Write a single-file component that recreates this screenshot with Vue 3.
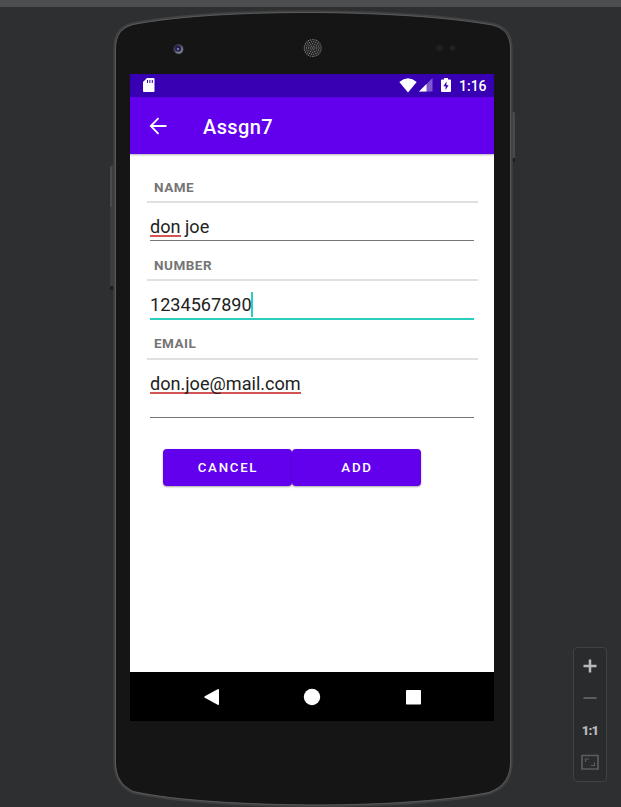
<script setup>
const fields = [
  { id: 'name', label: 'NAME', value: 'don', rest: ' joe', marked: true },
  { id: 'number', label: 'NUMBER', value: '1234567890', rest: '', focused: true },
  { id: 'email', label: 'EMAIL', value: 'don.joe@mail.com', rest: '', marked: true },
]
const dots = [{ x: 312.7, y: 48 }]
for (let ring = 1; ring <= 4; ring++) {
  const count = ring * 6
  for (let i = 0; i < count; i++) {
    const a = (i / count) * Math.PI * 2
    dots.push({ x: 312.7 + Math.cos(a) * ring * 2.1, y: 48 + Math.sin(a) * ring * 2.1 })
  }
}
</script>

<template>
  <main class="emulator">
    <svg class="shell" viewBox="0 0 621 807" aria-hidden="true">
      <rect width="621" height="7" fill="#4d4e50" />
      <rect x="110" y="165" width="5" height="125" rx="1.5" fill="#3c3d3e" />
      <rect x="110.5" y="167" width="1.2" height="40" fill="#555" />
      <rect x="110" y="286" width="4" height="4" fill="#1d1e1f" />
      <rect x="511" y="112" width="4" height="50" rx="1.5" fill="#484949" />
      <rect x="511" y="158" width="4" height="4" fill="#1d1e1f" />
      <path d="M114.5 48C115 34 120 27 133 23.500C180 14.500 246 11.500 313 11.500C382 12 447 16 493 24C505 27 511 33 511.500 48V763C511 778 505 788 489 793.500C440 803 370 806 313 806C248 805.500 177 802 133 792.500C120 786 115 777 114.500 763Z" fill="#151515" stroke="#404142" stroke-width="2.400" />
      <path d="M115.500 763V48C116 35 121 28 133 24.500C180 15.500 246 12.500 313 12.500C382 13 447 17 492 25C504 28 510 35 510.500 48V763C510 777 504 787 489 792.500C440 802 370 805 313 805C248 804.500 177 801 133 791.500C121 785 116 777 115.500 763" fill="none" stroke="#626262" stroke-width=".8" />
      <circle cx="178.500" cy="49" r="5.300" fill="#34343d" />
      <circle cx="178.800" cy="49.500" r="4.200" fill="#777789" />
      <circle cx="178" cy="48.500" r="3.200" fill="#24234f" />
      <circle cx="178" cy="49" r="1" fill="#9693d1" />
      <circle cx="312.700" cy="48" r="9.200" fill="#1e1e1e" />
      <circle v-for="(d, i) in dots" :key="i" :cx="d.x" :cy="d.y" r=".65" fill="#858585" />
      <circle cx="439.500" cy="48" r="3.300" fill="#202020" />
      <circle cx="452.500" cy="48" r="2.800" fill="#222" />
    </svg>

    <section class="screen">
      <header class="status">
        <svg class="sd" viewBox="0 0 12 14"><path d="M4 0H10.500Q11.500 0 11.500 1V13Q11.500 14 10.500 14H1Q0 14 0 13V4Z" fill="#fff" /><path d="M4.500 2V5M6.900 2V5M9.300 2V5" stroke="#3700b3" stroke-width="1" /></svg>
        <svg class="wifi" viewBox="0 0 18 15"><path d="M.3 4Q9-3.300 17.700 4L9 14.500Z" fill="#fff" /></svg>
        <svg class="signal" viewBox="0 0 14 14"><path d="M0 13.500L13.500 0V13.500Z" fill="#7f58d0" /><path d="M0 13.500L7.500 6V13.500Z" fill="#fff" /></svg>
        <svg class="battery" viewBox="0 0 10 14"><path d="M3 0H7V1.500H9Q10 1.500 10 2.500V13Q10 14 9 14H1Q0 14 0 13V2.500Q0 1.500 1 1.500H3Z" fill="#fff" /><path d="M5.500 3.500L2.400 8.300H4.600V12L7.600 7.200H5.500Z" fill="#3700b3" /></svg>
        <span class="clock">1:16</span>
      </header>
      <div class="appbar">
        <svg class="back" viewBox="0 0 18 18"><path d="M17.500 9H2M9.500 1.200L1.800 9L9.500 16.800" fill="none" stroke="#fff" stroke-width="1.800" /></svg>
        <h1>Assgn7</h1>
      </div>
      <form class="content" @submit.prevent>
        <div v-for="f in fields" :key="f.id" class="field" :class="f.id">
          <div class="label"><span>{{ f.label }}</span></div>
          <div class="entry" :class="{ focused: f.focused }">
            <span class="value" :class="{ marked: f.marked }">{{ f.value }}</span><span class="rest">{{ f.rest }}</span><i v-if="f.focused" class="caret"></i>
          </div>
        </div>
        <div class="buttons">
          <button type="button">CANCEL</button>
          <button type="button">ADD</button>
        </div>
      </form>
      <nav class="navbar">
        <svg viewBox="0 0 18 18"><path d="M2.800 8.200L15.600 1.300Q17 .7 17 2V16Q17 17.300 15.600 16.700L2.800 9.800Q1.500 9 2.800 8.200Z" fill="#fff" /></svg>
        <svg viewBox="0 0 18 18"><circle cx="9" cy="9" r="8.200" fill="#fff" /></svg>
        <svg viewBox="0 0 18 18"><rect x="2" y="2" width="15" height="14.500" rx=".7" fill="#fff" /></svg>
      </nav>
    </section>

    <aside class="zoom">
      <svg viewBox="0 0 18 18"><path d="M9 2.500V15.500M2.500 9H15.500" stroke="#b9b9b9" stroke-width="2.500" /></svg>
      <svg viewBox="0 0 18 18"><path d="M2.500 9H15.500" stroke="#5c5d5e" stroke-width="2" /></svg>
      <span>1:1</span>
      <svg viewBox="0 0 18 18"><path d="M1 2.500H17V16H1Z" fill="none" stroke="#5b5c5d" stroke-width="1.700" /><path d="M4.500 9V6H8M10 12.500H13.500V9.500" fill="none" stroke="#5b5c5d" stroke-width="1.200" /></svg>
    </aside>
  </main>
</template>

<style>
body { margin: 0; background: #2e2f31; overflow: hidden; }
</style>

<style scoped>
* { box-sizing: border-box; }
.emulator { position: relative; width: 621px; height: 807px; padding: 74px 14px 25px 130px; display: flex; justify-content: space-between; background: #2e2f31; font-family: Roboto, "Liberation Sans", sans-serif; }
.shell { position: absolute; inset: 0; width: 621px; height: 807px; }
.screen { position: relative; width: 364px; height: 647px; display: flex; flex-direction: column; background: #fff; }
.status { height: 23px; flex: none; display: flex; align-items: center; padding: 0 7px 1px 13px; background: #3700b3; color: #fff; }
.sd { width: 12px; height: 14px; }
.wifi { width: 18px; height: 15px; margin-left: auto; }
.signal { width: 14px; height: 14px; margin-left: 2px; }
.battery { width: 10px; height: 14px; margin-left: 8px; }
.clock { width: 28px; margin-left: 8px; font-size: 14px; font-weight: 500; line-height: 22px; white-space: nowrap; padding-top: 2px; }
.appbar { height: 57px; flex: none; display: flex; align-items: center; padding: 1px 20px 0 19px; background: #6200ee; color: #fff; box-shadow: 0 1px 2px rgba(0, 0, 0, .3); }
.back { width: 18px; height: 18px; }
h1 { margin: 1px 0 0 36px; font-size: 20px; line-height: 24px; font-weight: 500; letter-spacing: .4px; }
.content { flex: 1; padding: 19px 16px 0 17px; }
.field { height: 78px; }
.field.email { height: 105px; padding-top: 1px; }
.label { height: 30px; padding: 4px 7px 0; border-bottom: 2px solid #e0e0e0; color: #757575; font-size: 13.500px; line-height: 20px; font-weight: 700; letter-spacing: .5px; }
.email .label { padding-top: 3px; }
.entry { display: flex; height: 38px; margin: 0 4px 0 3px; padding-top: 11.500px; border-bottom: 1px solid #757575; color: #222; font-size: 18.100px; line-height: 24px; white-space: pre; }
.entry.focused { height: 39px; border-bottom: 2px solid #2bcdbd; }
.email .entry { height: 58px; }
.value.marked { height: 22px; background: linear-gradient(#d35454, #d35454) 0 100% / 100% 2px no-repeat; }
.caret { width: 2px; height: 25px; margin: -1px 0 0 -1px; background: #2bcdbd; }
.buttons { display: flex; margin: 15px 0 0 16px; }
button { width: 129px; height: 37px; padding: 0 0 0 1px; border: 0; border-radius: 4px; background: #6200ee; color: #fff; font: 500 13.300px/37px Roboto, sans-serif; letter-spacing: 1.700px; box-shadow: 0 1px 2px rgba(0, 0, 0, .35); }
.navbar { height: 49px; flex: none; display: flex; align-items: center; justify-content: center; gap: 83px; background: #000; }
.navbar svg { width: 18px; height: 18px; }
.zoom { position: relative; width: 34px; height: 135px; margin-top: 573px; flex: none; display: flex; flex-direction: column; align-items: center; padding-top: 9px; gap: 14px; border: 1px solid #414244; border-radius: 4px; background: #2a2b2c; }
.zoom svg { width: 18px; height: 18px; flex: none; }
.zoom span { height: 18px; color: #b9b9b9; font: 900 13px/20px Roboto, sans-serif; letter-spacing: -.8px; }
</style>
